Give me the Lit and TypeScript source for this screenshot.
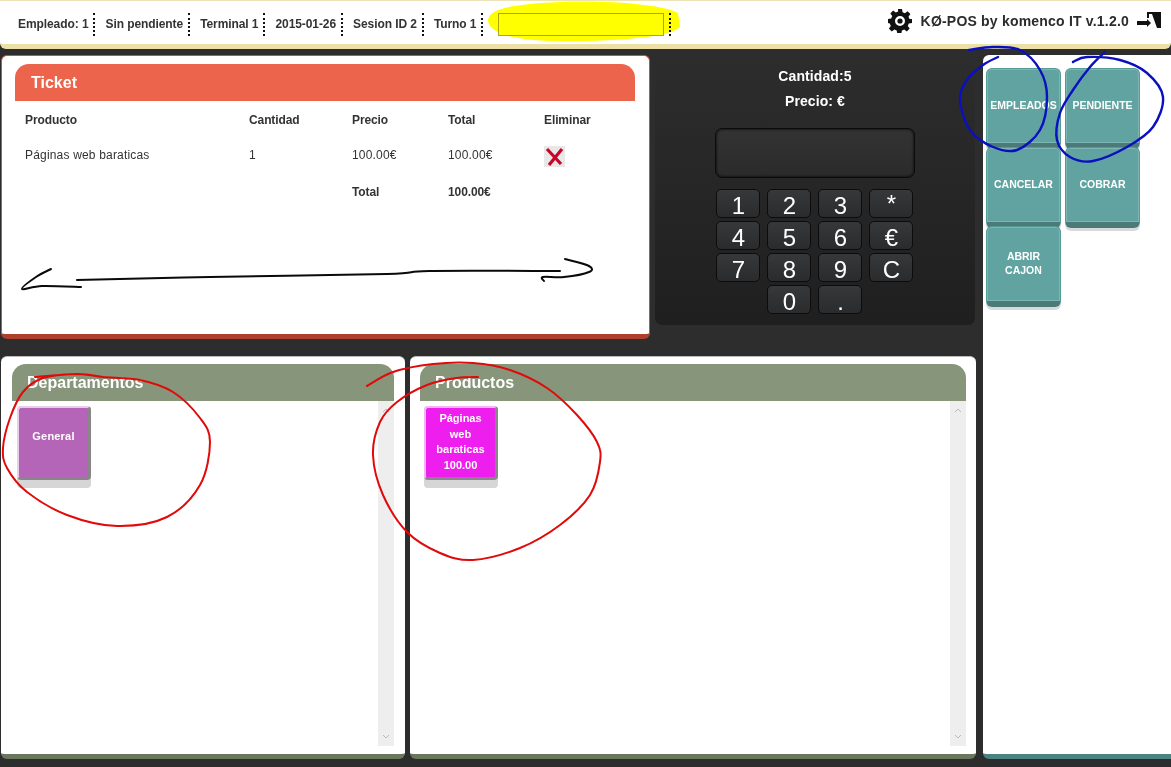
import { LitElement, html, css, svg } from "lit";
import { customElement } from "lit/decorators.js";

type Pt = [number, number];

function smooth(p: Pt[]): string {
  let d = `M${p[0][0]} ${p[0][1]}`;
  for (let i = 0; i < p.length - 1; i++) {
    const a = p[Math.max(0, i - 1)], b = p[i], c = p[i + 1], e = p[Math.min(p.length - 1, i + 2)];
    const c1: Pt = [b[0] + (c[0] - a[0]) / 6, b[1] + (c[1] - a[1]) / 6];
    const c2: Pt = [c[0] - (e[0] - b[0]) / 6, c[1] - (e[1] - b[1]) / 6];
    d += `C${c1[0].toFixed(1)} ${c1[1].toFixed(1)} ${c2[0].toFixed(1)} ${c2[1].toFixed(1)} ${c[0]} ${c[1]}`;
  }
  return d;
}

const BLUE1: Pt[] = [[969,50],[993,47],[1020,50],[1040,70],[1047,97],[1040,130],[1017,150],[993,147],[970,130],[960,100],[967,80],[983,65],[998,57]];
const BLUE2: Pt[] = [[1073,62],[1087,57],[1120,60],[1147,73],[1163,97],[1153,127],[1127,147],[1093,161],[1070,157],[1057,140],[1060,113],[1073,90],[1090,67],[1105,52]];
const RED1: Pt[] = [[35,377],[77,374],[103,377],[140,380],[173,392],[200,418],[210,442],[200,485],[167,517],[117,526],[67,515],[27,492],[7,468],[3,448],[10,418],[23,392],[43,378],[77,374],[103,377]];
const RED2: Pt[] = [[367,386],[393,372],[433,364],[473,363],[510,370],[547,388],[577,415],[597,442],[600,462],[590,495],[560,525],[520,548],[473,560],[440,553],[407,532],[383,495],[373,455],[380,422],[397,402],[427,385],[457,378],[478,377]];
const ARROW: Pt[][] = [
  [[77,280],[210,277],[387,274],[429,271],[560,271]],
  [[565,259],[589,266],[589,272],[564,277],[543,277],[544,281]],
  [[51,269],[36,277],[22,289],[42,286],[81,287]],
];

const KEYS = ["1","2","3","*","4","5","6","€","7","8","9","C","","0",".",""];
const INFO = ["Empleado: 1","Sin pendiente","Terminal 1","2015-01-26","Sesion ID 2","Turno 1"];
const ACTIONS = [["EMPLEADOS"],["PENDIENTE"],["CANCELAR"],["COBRAR"],["ABRIR","CAJON"]];

@customElement("app-root")
export class AppRoot extends LitElement {
  static styles = css`
    :host { display: block; position: relative; width: 1171px; height: 767px; overflow: hidden; background: #2e2d2d; font-family: "Liberation Sans", Arial, sans-serif; color: #333; }
    .top { display: flex; align-items: center; height: 40px; background: #fff; border-top: 1px solid #eee3b8; border-bottom: 5px solid #ece0a6; border-radius: 0 0 6px 6px; padding: 3px 10px 0 18px; box-sizing: content-box; }
    .info { display: flex; align-items: center; }
    .cell { display: flex; align-items: center; height: 23px; font-size: 12px; font-weight: bold; letter-spacing: -.08px; padding-right: 5px; margin-right: 10px; border-right: 2px dotted #111; white-space: nowrap; }
    .cell input { display: block; width: 164px; height: 21px; padding: 0; margin: 0 0 0 5px; background: #ff0; border: 1px solid #a9a92c; }
    .brand { margin-left: auto; margin-bottom: 7px; display: flex; align-items: center; font-size: 14px; font-weight: bold; color: #2c2c2c; letter-spacing: .2px; white-space: nowrap; }
    .gear { margin-right: 9px; display: block; }
    .exit { margin-left: 8px; display: block; }
    .body { display: grid; grid-template-columns: 976px 188px; column-gap: 7px; padding: 6px 0 0 0; }
    .left { display: flex; flex-direction: column; gap: 17px; }
    .row1 { display: flex; height: 284px; }
    .row2 { display: flex; height: 403px; gap: 5px; padding-left: 1px; }
    .panel { background: #fff; border-radius: 6px; box-sizing: border-box; border-bottom: 5px solid; }
    .ticket { width: 649px; margin-left: 1px; padding: 8px 14px 0 13px; border: 1px solid #c9513c; border-bottom: 5px solid #ad3f2c; }
    .head { height: 37px; display: flex; align-items: center; color: #fff; font-size: 16px; font-weight: bold; border-radius: 14px 14px 0 0; padding-left: 16px; }
    .ticket .head { background: #ec644b; }
    table { border-collapse: collapse; table-layout: fixed; width: 620px; font-size: 12px; }
    td, th { padding: 0 0 0 10px; text-align: left; height: 36px; color: #333; vertical-align: middle; box-sizing: border-box; }
    td { letter-spacing: .18px; }
    th { font-weight: bold; letter-spacing: -.1px; padding-top: 2px; }
    .rm { display: block; width: 21px; height: 21px; background: #e8e8e8; margin-top: 3px; }
    .keypad { width: 320px; height: 270px; margin-left: 5px; background: linear-gradient(#2d2d2d, #1f1f1f); border-radius: 0 0 7px 7px; display: flex; flex-direction: column; align-items: center; box-sizing: border-box; padding-top: 9px; color: #fff; font-size: 14px; font-weight: bold; }
    .keypad .ln { height: 25px; line-height: 25px; letter-spacing: .1px; }
    .display { width: 200px; height: 50px; box-sizing: border-box; margin-top: 14px; background: linear-gradient(#333, #2b2b2b); border: 1px solid #0b0b0b; border-radius: 7px; box-shadow: inset 0 0 3px #000; }
    .keys { display: grid; grid-template-columns: repeat(4, 44px); grid-auto-rows: 29px; gap: 3px 7px; margin: 11px 2px 0 0; }
    .key { box-sizing: border-box; display: flex; align-items: center; justify-content: center; padding: 4px 0 0 2px; font-size: 24px; font-weight: normal; background: linear-gradient(#37383a, #2a2b2c); border: 1px solid #0c0c0c; border-radius: 5px; color: #fff; }
    .key.blank { visibility: hidden; }
    .key.star { padding-top: 0; }
    .list { padding: 7px 10px 0 11px; border-color: #6b775c; border-top: 1px solid #bbb; }
    .dept { width: 404px; padding-right: 11px; }
    .prod { width: 566px; padding-left: 10px; }
    .list .head { background: #87957a; padding-left: 15px; }
    .area { display: flex; justify-content: space-between; height: 345px; }
    .tiles { padding: 5px 0 0 5px; }
    .prod .tiles { padding-left: 4px; }
    .tile { width: 74px; height: 82px; border-radius: 4px; background: #d6d6d6; }
    .face { width: 74px; height: 74px; box-sizing: border-box; border-radius: 4px; border: 2px solid #e8cfe8; border-right: 3px solid #8a858a; border-bottom: 3px solid #8a858a; color: #fff; font-size: 11px; font-weight: bold; display: flex; flex-direction: column; align-items: center; justify-content: center; text-align: center; line-height: 15.5px; }
    .face.purple { background: #b565b8; padding-bottom: 12px; letter-spacing: .2px; }
    .face.pink { background: #ee1eee; border-top-color: #f3b5f3; border-left-color: #f3b5f3; padding-bottom: 1px; }
    .bar { width: 16px; background: #eee; display: flex; flex-direction: column; justify-content: space-between; align-items: center; padding: 7px 0; box-sizing: border-box; }
    .bar svg { display: block; }
    .right { height: 704px; box-sizing: border-box; background: #fff; border-radius: 6px 0 0 6px; border-bottom: 5px solid #4c8282; padding: 13px 0 0 3px; display: grid; grid-template-columns: repeat(2, 75px); grid-auto-rows: 79px; column-gap: 4px; align-content: start; }
    .act { width: 75px; height: 81px; box-sizing: border-box; border-radius: 6px; background: #60a3a0; border: 1px solid #569a96; border-bottom: 6px solid #4c7a78; box-shadow: 0 3px 0 #d9d9d9, inset 0 0 0 1px #7db5b2; color: #fff; font-size: 10.5px; font-weight: bold; display: flex; flex-direction: column; align-items: center; justify-content: center; line-height: 14px; padding-bottom: 3px; }
    .marks { position: absolute; left: 0; top: 0; width: 1171px; height: 767px; pointer-events: none; fill: none; stroke-linecap: round; stroke-linejoin: round; }
    .blob { fill: #ffff00; mix-blend-mode: multiply; }
  `;

  render() {
    return html`
      <div class="top">
        <div class="info">
          ${INFO.map((t) => html`<div class="cell">${t}</div>`)}
          <div class="cell"><input aria-label="campo" /></div>
        </div>
        <div class="brand">
          <svg class="gear" width="24" height="24" viewBox="0 0 24 24" aria-hidden="true"><path fill="#111" fill-rule="evenodd" d="M10 0h4l.6 3.2 2.3 1 2.7-1.900 2.800 2.800-1.900 2.700 1 2.300L24 10v4l-3.200.6-1 2.300 1.900 2.700-2.800 2.800-2.700-1.900-2.300 1-.6 3.200h-4l-.6-3.200-2.300-1-2.700 1.900-2.800-2.800 1.900-2.700-1-2.300L0 14v-4l3.200-.6 1-2.300-1.900-2.700 2.800-2.800 2.700 1.900 2.300-1zM12 7a5 5 0 1 0 0 10 5 5 0 0 0 0-10z"/><circle cx="12" cy="12" r="2.600" fill="#111"/></svg>
          KØ-POS by komenco IT v.1.2.0
          <svg class="exit" width="24" height="17" viewBox="0 0 24 17" aria-hidden="true"><path fill="#111" d="M10 0H24V16H20L15 2H12V6H10Z"/><path fill="#111" d="M0 9H10V7L14 11L10 15V13H0Z"/></svg>
        </div>
      </div>
      <div class="body">
        <div class="left">
          <div class="row1">
            <section class="panel ticket">
              <div class="head">Ticket</div>
              <table>
                <colgroup><col style="width:224px" /><col style="width:103px" /><col style="width:96px" /><col style="width:96px" /><col /></colgroup>
                <tr><th>Producto</th><th>Cantidad</th><th>Precio</th><th>Total</th><th>Eliminar</th></tr>
                <tr><td>Páginas web baraticas</td><td>1</td><td>100.00€</td><td>100.00€</td>
                  <td><svg class="rm" viewBox="0 0 21 21" aria-label="Eliminar"><path d="M3 3l14 15M18 3L5 19" stroke="#c4082c" stroke-width="3.200" fill="none"/></svg></td></tr>
                <tr><td></td><td></td><th>Total</th><th>100.00€</th><td></td></tr>
              </table>
            </section>
            <section class="keypad">
              <div class="ln">Cantidad:5</div>
              <div class="ln">Precio: €</div>
              <div class="display"></div>
              <div class="keys">
                ${KEYS.map((k) => html`<div class="key ${k ? "" : "blank"} ${k === "*" ? "star" : ""}">${k}</div>`)}
              </div>
            </section>
          </div>
          <div class="row2">
            ${this.list("dept", "Departamentos", html`<div class="tile"><div class="face purple">General</div></div>`)}
            ${this.list("prod", "Productos", html`<div class="tile"><div class="face pink"><span>Páginas</span><span>web</span><span>baraticas</span><span>100.00</span></div></div>`)}
          </div>
        </div>
        <aside class="right">
          ${ACTIONS.map((a) => html`<div class="act">${a.map((l) => html`<span>${l}</span>`)}</div>`)}
        </aside>
      </div>
      <svg class="marks" viewBox="0 0 1171 767" aria-hidden="true">
        <path class="blob" d="M488 21C488 9 512 4 560 2 610 0 664 5 678 13L680 27C672 36 622 42 560 41 520 41 490 35 488 21Z"/>
        ${[BLUE1, BLUE2].map((p) => svg`<path d=${smooth(p)} stroke="#0a10c0" stroke-width="2.400"/>`)}
        ${[RED1, RED2].map((p) => svg`<path d=${smooth(p)} stroke="#e00a0a" stroke-width="2"/>`)}
        ${ARROW.map((p) => svg`<path d=${smooth(p)} stroke="#0a0a0a" stroke-width="2"/>`)}
      </svg>
    `;
  }

  private list(cls: string, title: string, tile: unknown) {
    return html`
      <section class="panel list ${cls}">
        <div class="head">${title}</div>
        <div class="area">
          <div class="tiles">${tile}</div>
          <div class="bar">
            <svg width="8" height="5" viewBox="0 0 8 5"><path d="M1 4l3-3 3 3" stroke="#bbb" fill="none"/></svg>
            <svg width="8" height="5" viewBox="0 0 8 5"><path d="M1 1l3 3 3-3" stroke="#bbb" fill="none"/></svg>
          </div>
        </div>
      </section>`;
  }
}
